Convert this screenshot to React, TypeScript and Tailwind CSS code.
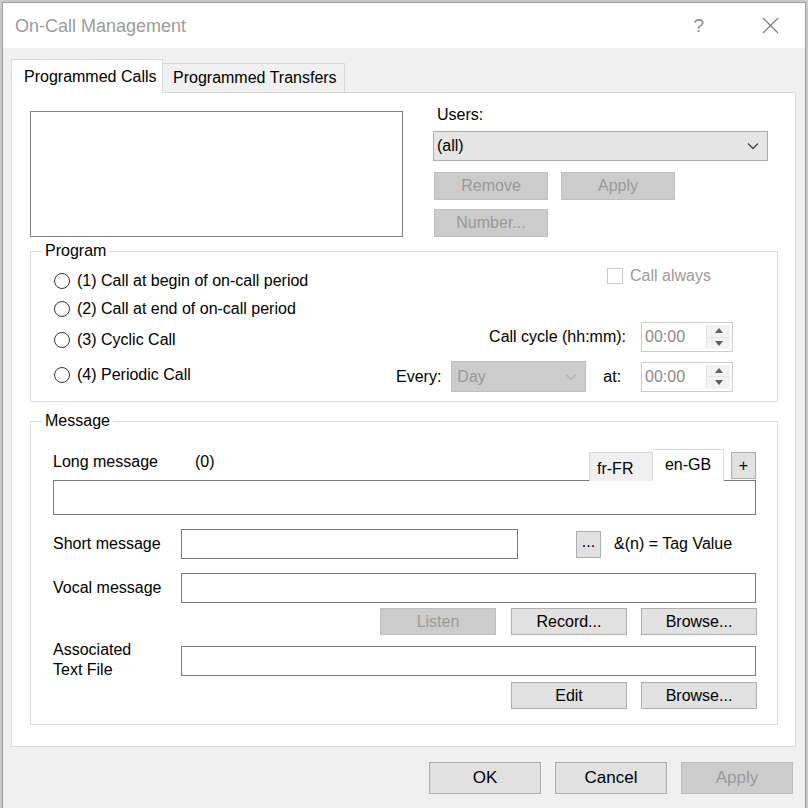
import React from 'react'

const font = { fontFamily: '"Liberation Sans", Arial, sans-serif' }

const Btn = (props: { label: string; disabled?: boolean; className?: string }) => {
  const { label, disabled, className = '' } = props
  return (
    <div
      className={`flex items-center justify-center border text-[16px] leading-[20px] ${
        disabled
          ? 'bg-[#cccccc] border-[#bfbfbf] text-[#9a9a9a]'
          : 'bg-[#e1e1e1] border-[#adadad] text-black'
      } ${className}`}
    >
      {label}
    </div>
  )
}

const Chevron = ({ color }: { color: string }) => (
  <svg width="12" height="8" viewBox="0 0 12 8">
    <path d="M1 1.5 L6 6.5 L11 1.5" fill="none" stroke={color} strokeWidth="1.3" />
  </svg>
)

const Radio = ({ label }: { label: string }) => (
  <div className="flex h-[28px] items-center">
    <div className="h-[16px] w-[16px] rounded-full border border-[#333333] bg-white" />
    <span className="ml-[7px]">{label}</span>
  </div>
)

const Spinner = () => (
  <div className="flex h-[30px] w-[92px] border border-[#cccccc] bg-white">
    <div className="flex flex-1 items-center pl-[3px] text-[#8a8a8a]">00:00</div>
    <div className="my-[2px] mr-[2px] flex w-[24px] flex-col border-l border-[#e3e3e3] bg-[#f3f3f3]">
      <div className="flex flex-1 items-center justify-center border-b border-[#e3e3e3]">
        <svg width="8" height="5" viewBox="0 0 8 5">
          <path d="M0 5 L4 0 L8 5 Z" fill="#5f5f5f" />
        </svg>
      </div>
      <div className="flex flex-1 items-center justify-center">
        <svg width="8" height="5" viewBox="0 0 8 5">
          <path d="M0 0 L4 5 L8 0 Z" fill="#5f5f5f" />
        </svg>
      </div>
    </div>
  </div>
)

const TextBox = ({ className = '' }: { className?: string }) => (
  <div className={`border border-[#7a7a7a] bg-white ${className}`} />
)

export default function App() {
  return (
    <div className="h-[808px] w-[808px] overflow-hidden bg-[#c9c9c9] px-[2px] pt-[2px] text-[16px] leading-[20px] text-black" style={font}>
      <div className="flex h-full w-full flex-col border border-b-0 border-[#9c9c9c] bg-[#f0f0f0]">
        {/* title bar */}
        <div className="flex h-[45px] items-center bg-white">
          <span className="ml-[12px] text-[18px] text-[#9b9b9b]">On-Call Management</span>
          <span className="ml-auto text-[19px] text-[#8c8c8c]">?</span>
          <svg className="ml-[58px] mr-[26px]" width="17" height="17" viewBox="0 0 17 17">
            <path d="M1 1 L16 16 M16 1 L1 16" stroke="#7d7d7d" strokeWidth="1.2" />
          </svg>
        </div>

        <div className="pl-[8px] pt-[11px]">
          {/* tabs */}
          <div className="flex items-end">
            <div className="relative z-10 -mb-px flex h-[34px] w-[152px] items-center border border-b-0 border-[#d9d9d9] bg-white pl-[12px]">
              Programmed Calls
            </div>
            <div className="flex h-[29px] w-[182px] items-center border border-b-0 border-l-0 border-[#d9d9d9] bg-[#f0f0f0] pl-[10px]">
              Programmed Transfers
            </div>
          </div>

          {/* panel */}
          <div className="h-[655px] w-[785px] border border-[#d9d9d9] bg-white pl-[18px] pt-[18px]">
            <div className="flex">
              <div className="h-[126px] w-[373px] border border-[#828282] bg-white" />
              <div className="ml-[30px] flex flex-col">
                <span className="-mt-[6px] ml-[4px]">Users:</span>
                <div className="mt-[6px] flex h-[30px] w-[335px] items-center border border-[#acacac] bg-[#e5e5e5] pl-[3px] pr-[8px]">
                  <span>(all)</span>
                  <span className="ml-auto flex">
                    <Chevron color="#444444" />
                  </span>
                </div>
                <div className="mt-[11px] flex">
                  <Btn label="Remove" disabled className="ml-px h-[28px] w-[114px]" />
                  <Btn label="Apply" disabled className="ml-[13px] h-[28px] w-[114px]" />
                </div>
                <Btn label="Number..." disabled className="ml-px mt-[9px] h-[28px] w-[114px]" />
              </div>
            </div>

            {/* Program */}
            <fieldset className="mt-[4px] w-[748px] border border-[#dcdcdc]">
              <legend className="ml-[11px] px-[3px]">Program</legend>
              <div className="flex h-[140px] justify-between">
                <div className="flex flex-col pl-[23px] pt-[6px]">
                  <Radio label="(1) Call at begin of on-call period" />
                  <Radio label="(2) Call at end of on-call period" />
                  <div className="mt-[3px]">
                    <Radio label="(3) Cyclic Call" />
                  </div>
                  <div className="mt-[7px]">
                    <Radio label="(4) Periodic Call" />
                  </div>
                </div>
                <div className="mr-[44px] flex w-[337px] flex-col">
                  <div className="ml-[211px] mt-[1px] flex h-[28px] items-center text-[#9a9a9a]">
                    <div className="h-[16px] w-[16px] border border-[#cccccc] bg-white" />
                    <span className="ml-[7px]">Call always</span>
                  </div>
                  <div className="mt-[32px] flex h-[30px] items-center justify-end">
                    <span>Call cycle (hh:mm):</span>
                    <div className="ml-[15px]">
                      <Spinner />
                    </div>
                  </div>
                  <div className="mt-[9px] flex h-[31px] items-center">
                    <span>Every:</span>
                    <div className="ml-[10px] flex h-[31px] w-[135px] items-center border border-[#bfbfbf] bg-[#cccccc] pl-[5px] pr-[8px] text-[#9a9a9a]">
                      <span>Day</span>
                      <span className="ml-auto flex">
                        <Chevron color="#b0b0b0" />
                      </span>
                    </div>
                    <span className="ml-[17px]">at:</span>
                    <div className="ml-auto">
                      <Spinner />
                    </div>
                  </div>
                </div>
              </div>
            </fieldset>

            {/* Message */}
            <fieldset className="mt-[9px] w-[748px] border border-[#dcdcdc]">
              <legend className="ml-[11px] px-[3px]">Message</legend>
              <div className="flex h-[293px] flex-col pl-[22px] pr-[21px]">
                <div className="flex h-[49px] items-end">
                  <span className="mb-[8px] w-[142px]">Long message</span>
                  <span className="mb-[8px]">(0)</span>
                  <div className="ml-auto flex items-end">
                    <div className="relative z-10 -mb-px flex h-[29px] w-[64px] items-center border border-b-0 border-[#d9d9d9] bg-[#f0f0f0] pl-[7px] pt-[3px]">
                      fr-FR
                    </div>
                    <div className="relative z-10 -mb-px flex h-[32px] w-[71px] items-center justify-center border border-b-0 border-l-0 border-[#d9d9d9] bg-white pb-[2px]">
                      en-GB
                    </div>
                    <Btn label="+" className="mb-px ml-[7px] h-[27px] w-[25px] text-[15px]" />
                  </div>
                </div>
                <TextBox className="h-[35px]" />

                <div className="mt-[14px] flex h-[30px] items-center">
                  <span className="w-[128px]">Short message</span>
                  <TextBox className="h-[30px] w-[337px]" />
                  <Btn label="..." className="ml-[58px] h-[27px] w-[25px] pb-[4px] text-[13px]" />
                  <span className="ml-[13px]">&amp;(n) = Tag Value</span>
                </div>

                <div className="mt-[14px] flex h-[30px] items-center">
                  <span className="w-[128px]">Vocal message</span>
                  <TextBox className="h-[30px] flex-1" />
                </div>

                <div className="mt-[5px] flex justify-end">
                  <Btn label="Listen" disabled className="h-[27px] w-[116px]" />
                  <Btn label="Record..." className="ml-[15px] h-[27px] w-[116px]" />
                  <Btn label="Browse..." className="-mr-px ml-[14px] h-[27px] w-[116px]" />
                </div>

                <div className="mt-[11px] flex h-[30px] items-start">
                  <span className="-mt-[6px] w-[128px]">
                    Associated
                    <br />
                    Text File
                  </span>
                  <TextBox className="h-[30px] flex-1" />
                </div>

                <div className="mt-[6px] flex justify-end">
                  <Btn label="Edit" className="h-[27px] w-[116px]" />
                  <Btn label="Browse..." className="-mr-px ml-[14px] h-[27px] w-[116px]" />
                </div>
              </div>
            </fieldset>
          </div>

          {/* dialog buttons */}
          <div className="mr-[12px] mt-[15px] flex justify-end">
            <Btn label="OK" className="h-[32px] w-[112px] text-[17px]" />
            <Btn label="Cancel" className="ml-[14px] h-[32px] w-[112px] text-[17px]" />
            <Btn label="Apply" disabled className="ml-[14px] h-[32px] w-[112px] text-[17px]" />
          </div>
        </div>
      </div>
    </div>
  )
}
